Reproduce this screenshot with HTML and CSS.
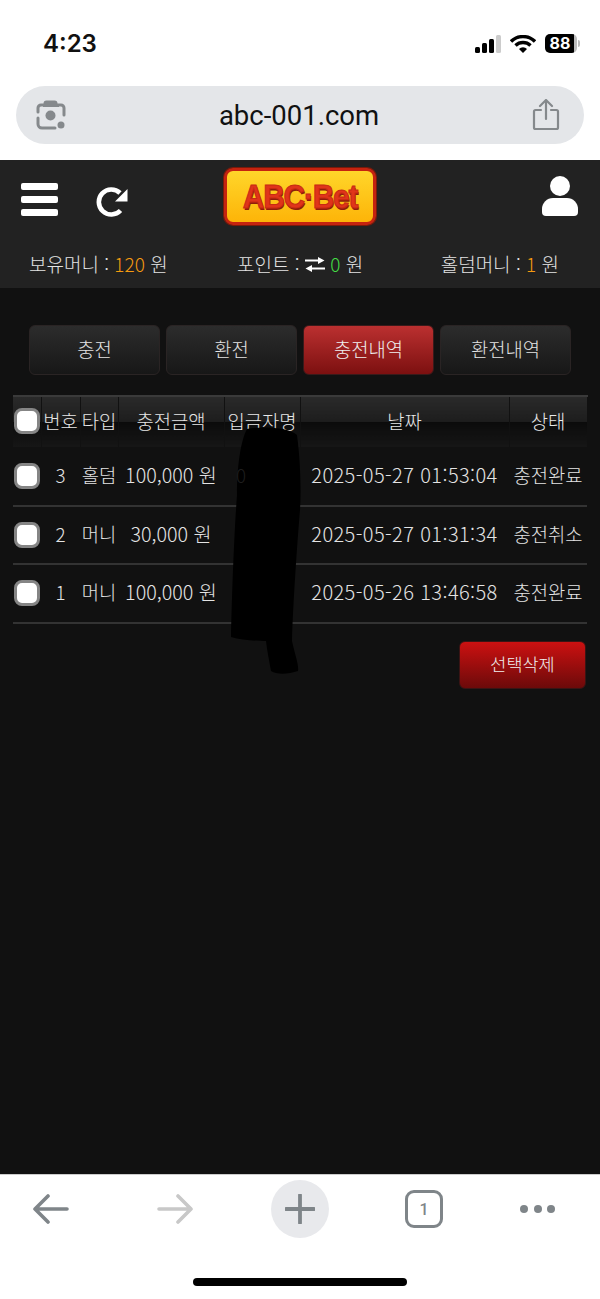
FILE: index.html
```html
<!DOCTYPE html>
<html lang="ko">
<head>
    <meta charset="UTF-8">
    <meta name="viewport" content="width=device-width, initial-scale=1.0">
    <title>ABC-Bet</title>
    <link rel="stylesheet" href="styles.css">
</head>
<body>
    <div class="phone">
        <div class="status-bar">
            <span class="clock">4:23</span>
            <div class="status-icons">
                <svg class="signal" viewBox="0 0 26 18"><rect x="0" y="12" width="5" height="6" rx="1.5" fill="#000"/><rect x="7" y="8" width="5" height="10" rx="1.5" fill="#000"/><rect x="14" y="4" width="5" height="14" rx="1.5" fill="#000"/><rect x="21" y="0" width="5" height="18" rx="1.5" fill="#ccc"/></svg>
                <svg class="wifi" viewBox="0 0 26 18"><path d="M1 6.5a17 17 0 0 1 24 0" fill="none" stroke="#000" stroke-width="3.4"/><path d="M5.5 10.5a11 11 0 0 1 15 0" fill="none" stroke="#000" stroke-width="3.4"/><path d="M9 14a5.5 5.5 0 0 1 8 0l-4 4z" fill="#000"/></svg>
                <div class="battery"><span class="battery-level">88</span></div>
            </div>
        </div>

        <div class="url-bar">
            <svg class="url-icon" viewBox="0 0 30 30"><path d="M9 5V3.5a1.5 1.5 0 0 1 1.500-1.500h8A1.500 1.500 0 0 1 20 3.500V5zM2 12V8a3 3 0 0 1 3-3h20a3 3 0 0 1 3 3v7M2 18v6a4 4 0 0 0 4 4h13" fill="none" stroke="#85898c" stroke-width="3" stroke-linecap="round"/><path d="M7 5h16v2H7z" fill="#85898c"/><circle cx="14.500" cy="15.500" r="5" fill="#85898c"/><circle cx="25" cy="25" r="3.500" fill="#85898c"/></svg>
            <span class="url-text">abc-001.com</span>
            <svg class="url-icon share" viewBox="0 0 28 32"><path d="M14 20V2M8 7l6-6 6 6M9 11H3.500A1.500 1.500 0 0 0 2 12.500v16A1.500 1.500 0 0 0 3.500 30h21a1.500 1.500 0 0 0 1.500-1.500v-16a1.500 1.500 0 0 0-1.500-1.500H19" fill="none" stroke="#85898c" stroke-width="2.200" stroke-linecap="round" stroke-linejoin="round"/></svg>
        </div>

        <header class="site-head">
            <div class="head-left">
                <div class="burger"><span></span><span></span><span></span></div>
                <svg class="refresh" viewBox="0 0 32 30"><path d="M24.500 23.500A12.500 12.500 0 1 1 24 6" fill="none" stroke="#fff" stroke-width="4.600"/><path d="M31.500 2v12.500H19z" fill="#fff"/></svg>
            </div>
            <div class="logo"><span>ABC·Bet</span></div>
            <svg class="user" viewBox="0 0 36 40"><circle cx="18" cy="10" r="10" fill="#fff"/><path d="M0 33a11 11 0 0 1 11-11h14a11 11 0 0 1 11 11v3a4 4 0 0 1-4 4H4a4 4 0 0 1-4-4z" fill="#fff"/></svg>
        </header>

        <div class="money-row">
            <span>보유머니 : <em class="orange">120</em> 원</span>
            <span class="points">포인트 : <svg class="swap" viewBox="0 0 20 15"><path d="M0 2.500h13V0l6.500 3.500L13 7V4.500H0zM20 10.500H7V8l-6.500 3.500L7 15v-2.500h13z" fill="#fff"/></svg> <em class="green">0</em> 원</span>
            <span>홀덤머니 : <em class="orange">1</em> 원</span>
        </div>

        <main class="content">
            <nav class="tabs">
                <a class="tab">충전</a>
                <a class="tab">환전</a>
                <a class="tab active">충전내역</a>
                <a class="tab">환전내역</a>
            </nav>

            <div class="table-wrap">
                <table class="history">
                    <thead>
                        <tr>
                            <th class="col-check"><input type="checkbox"></th>
                            <th class="col-no">번호</th>
                            <th class="col-type">타입</th>
                            <th class="col-amount">충전금액</th>
                            <th class="col-name">입금자명</th>
                            <th class="col-date">날짜</th>
                            <th class="col-state">상태</th>
                        </tr>
                    </thead>
                    <tbody>
                        <tr>
                            <td><input type="checkbox"></td>
                            <td>3</td>
                            <td>홀덤</td>
                            <td class="amount">100,000 원</td>
                            <td class="hidden-name">0</td>
                            <td class="date">2025-05-27 01:53:04</td>
                            <td>충전완료</td>
                        </tr>
                        <tr>
                            <td><input type="checkbox"></td>
                            <td>2</td>
                            <td>머니</td>
                            <td class="amount">30,000 원</td>
                            <td></td>
                            <td class="date">2025-05-27 01:31:34</td>
                            <td>충전취소</td>
                        </tr>
                        <tr>
                            <td><input type="checkbox"></td>
                            <td>1</td>
                            <td>머니</td>
                            <td class="amount">100,000 원</td>
                            <td></td>
                            <td class="date">2025-05-26 13:46:58</td>
                            <td>충전완료</td>
                        </tr>
                    </tbody>
                </table>
                <svg class="scribble" viewBox="0 0 72 250"><path d="M16 4C30 1 58 2 66 10C70 40 70 70 69 85C66 120 62 180 61 216C64 230 68 240 67 246C58 249 46 250 40 246C38 235 36 225 35 216C25 216 10 215 0 212C1 170 3 110 6 70C6 40 10 15 16 4z" fill="#000"/></svg>
            </div>

            <div class="table-actions">
                <button class="delete-btn">선택삭제</button>
            </div>
        </main>

        <footer class="browser-bar">
            <div class="browser-icons">
                <svg class="nav-icon back" viewBox="0 0 36 30"><path d="M34 15H3M15 2L2 15l13 13" fill="none" stroke="#7f8589" stroke-width="3.600" stroke-linecap="round" stroke-linejoin="round"/></svg>
                <svg class="nav-icon" viewBox="0 0 36 30"><path d="M2 15h31M21 2l13 13-13 13" fill="none" stroke="#c8c8c8" stroke-width="3.600" stroke-linecap="round" stroke-linejoin="round"/></svg>
                <div class="plus-btn"><svg viewBox="0 0 30 30"><path d="M15 1v28M1 15h28" fill="none" stroke="#7f8589" stroke-width="3.800" stroke-linecap="round"/></svg></div>
                <div class="tab-count">1</div>
                <div class="dots"><span></span><span></span><span></span></div>
            </div>
            <div class="home-bar"></div>
        </footer>
    </div>
</body>
</html>
```

FILE: styles.css
```css
* { box-sizing: border-box; }
body { margin: 0; background: #fff; font-family: "Noto Sans CJK KR", "Noto Sans", sans-serif; }
em { font-style: normal; }

.phone { width: 600px; height: 1299px; display: flex; flex-direction: column; overflow: hidden; }

/* --- iOS status bar --- */
.status-bar { height: 86px; flex: none; display: flex; justify-content: space-between; align-items: flex-start; padding: 29px 23px 0 43px; }
.clock { font-family: Inter, "Liberation Sans", sans-serif; font-size: 24px; font-weight: 600; line-height: 30px; color: #111; }
.status-icons { display: flex; align-items: center; gap: 9px; padding-top: 5px; }
.signal { width: 26px; height: 18px; }
.wifi { width: 26px; height: 18px; }
.battery { width: 32px; height: 19px; background: linear-gradient(90deg, #000 90%, #bbb 90%); border-radius: 5px; color: #fff; font-family: Inter, "Liberation Sans", sans-serif; font-size: 16px; font-weight: 700; line-height: 19px; text-align: center; padding-right: 2px; position: relative; }
.battery::after { content: ""; position: absolute; left: 33px; top: 6px; width: 2px; height: 7px; background: #bbb; border-radius: 0 2px 2px 0; }

/* --- browser url bar --- */
.url-bar { height: 58px; flex: none; margin: 0 16px 16px; background: #e4e6e9; border-radius: 29px; display: flex; justify-content: space-between; align-items: center; padding: 0 24px 0 20px; }
.url-icon { width: 30px; height: 30px; }
.url-icon.share { width: 28px; height: 32px; }
.url-text { font-family: Roboto, "Liberation Sans", sans-serif; font-size: 27.500px; color: #111; }

/* --- site header --- */
.site-head { height: 80px; flex: none; background: #222; display: flex; justify-content: space-between; align-items: flex-start; padding: 8px 22px 0 21px; position: relative; }
.head-left { display: flex; gap: 38px; padding-top: 15px; }
.burger { width: 37px; display: flex; flex-direction: column; gap: 6px; }
.burger span { height: 7px; background: #fff; border-radius: 2px; }
.refresh { width: 32px; height: 30px; margin-top: 4px; }
.logo { position: absolute; left: 224px; top: 8px; width: 152px; height: 57px; border: 3px solid #c5230f; border-radius: 9px; background: linear-gradient(#ffd62a, #fdb408); box-shadow: 0 0 0 1px #7a1a0a; display: flex; justify-content: center; align-items: center; }
.logo span { font-family: "Liberation Sans", sans-serif; font-weight: 700; font-size: 34px; letter-spacing: -1.400px; color: #e0341a; -webkit-text-stroke: 1px #c72a12; text-shadow: 1px 2px 0 #8f1d0a; transform: scaleX(0.88); }
.user { width: 36px; height: 40px; margin-top: 8px; }

.money-row { height: 48px; flex: none; background: #222; color: #e4e4e4; font-size: 19px; font-weight: 300; display: flex; justify-content: space-between; align-items: center; padding: 0 41px 2px 29px; }
.points { margin-right: 8px; }
.orange { color: #f59a10; }
.green { color: #44dd44; }
.swap { width: 20px; height: 15px; }

/* --- main content --- */
.content { flex: 1; background: #111; padding: 37px 13px 0; color: #e4e4e4; }
.tabs { display: flex; gap: 6px; padding: 0 16px; }
.tab { width: 131px; height: 50px; display: flex; justify-content: center; align-items: center; font-size: 18.800px; font-weight: 300; color: #e4e4e4; background: linear-gradient(#2c2c2c, #171717); border: 1px solid #2a2424; border-radius: 6px; padding-bottom: 3px; }
.tab.active { background: linear-gradient(#bb3030, #7c1010); color: #f0f0f0; border-color: #3a1a1a; }

.table-wrap { position: relative; margin-top: 20px; }
.history { width: 574px; border-collapse: collapse; table-layout: fixed; }
.history th { height: 51px; padding: 0 0 3px; font-size: 18.800px; font-weight: 300; color: #e8e8e8; background: linear-gradient(#2a2a2a 0, #1d1d1d 49%, #0b0b0b 50%, #161616 100%); border-top: 2px solid #3a3a3a; border-right: 1px solid #111; text-align: center; }
.history th.col-check { padding: 0 0 2px; }
.history td { height: 58.500px; padding: 0 0 3px; font-size: 18.800px; font-weight: 300; color: #e4e4e4; text-align: center; border-bottom: 2px solid #333; white-space: nowrap; }
.history td:first-child { padding: 0; }
.history td.date { font-size: 20px; letter-spacing: 0.4px; }
.history td.amount { font-size: 19.700px; }
.history td.hidden-name { position: relative; z-index: 1; color: #1e1e1e; text-align: left; padding-left: 12px; }
.col-check { width: 28px; }
.col-no { width: 39px; }
.col-type { width: 38px; }
.col-amount { width: 106px; }
.col-name { width: 76px; }
.col-date { width: 209px; }
.col-state { width: 78px; }
.history input { appearance: none; display: block; width: 26px; height: 26px; margin: 0 0 0 1px; background: #fff; border: 3px solid #858585; border-radius: 8px; }

.scribble { position: absolute; left: 218px; top: 30px; width: 72px; height: 250px; }

.table-actions { display: flex; justify-content: flex-end; padding: 17px 1px 0 0; }
.delete-btn { width: 127px; height: 48px; font-family: inherit; font-size: 17.500px; font-weight: 300; color: #f0f0f0; background: linear-gradient(#cc1111, #6c0a0a); border: 1px solid #3a1414; border-radius: 6px; padding-bottom: 4px; }

/* --- browser bottom bar --- */
.browser-bar { height: 125px; flex: none; background: #fff; border-top: 1px solid #ccc; padding-top: 5px; display: flex; flex-direction: column; align-items: center; }
.browser-icons { width: 100%; height: 58px; display: flex; gap: 77px; align-items: center; padding-left: 33px; }
.nav-icon { width: 36px; height: 30px; }
.nav-icon.back { margin-right: 11px; }
.plus-btn { width: 58px; height: 58px; margin-left: 1px; margin-right: -1px; border-radius: 50%; background: #e8e9ec; display: flex; justify-content: center; align-items: center; }
.plus-btn svg { width: 30px; height: 30px; }
.tab-count { width: 38px; height: 38px; border: 3.500px solid #7f8589; border-radius: 9px; color: #7f8589; font-family: Roboto, "Liberation Sans", sans-serif; font-size: 16px; font-weight: 500; display: flex; justify-content: center; align-items: center; }
.dots { display: flex; gap: 5.500px; }
.dots span { width: 8px; height: 8px; border-radius: 50%; background: #7f8589; }
.home-bar { width: 214px; height: 8px; margin-top: 40px; background: #000; border-radius: 4px; }
```
